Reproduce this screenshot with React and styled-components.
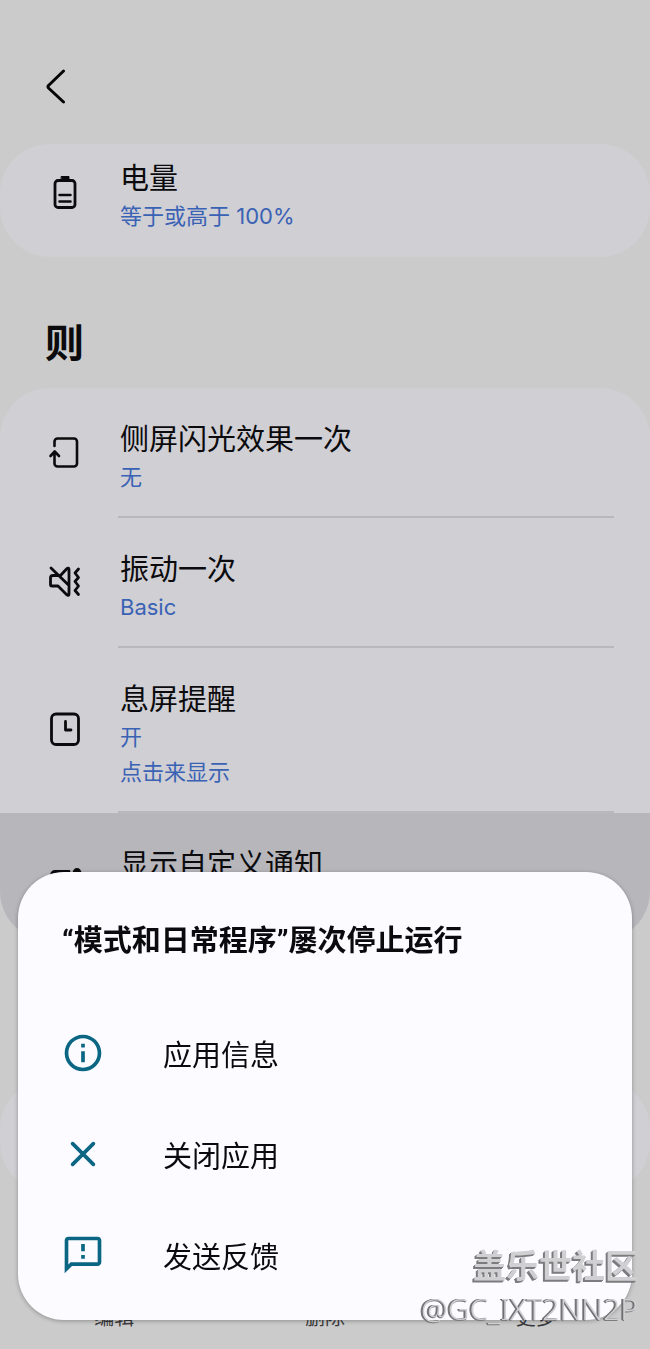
import React from 'react';
import styled, { createGlobalStyle } from 'styled-components';
import { MdInfoOutline, MdOutlineFeedback } from 'react-icons/md';

const GlobalStyle = createGlobalStyle`
  * {
    box-sizing: border-box;
  }
  body {
    margin: 0;
    background-color: #cbcbcb;
    font-family: Inter, 'Noto Sans CJK SC', sans-serif;
    color: #0b0b0d;
  }
`;
const Page = styled.div`
  display: flex;
  flex-direction: column;
  height: 100vh;
  overflow: hidden;
`;
const Header = styled.header`
  display: flex;
  padding: 63px 32px 33px;
`;
const BackButton = styled.button`
  display: flex;
  align-items: center;
  justify-content: center;
  width: 48px;
  height: 48px;
  padding: 0;
  border: none;
  background: none;
  color: #050505;
`;
const Content = styled.main`
  flex: 1;
  min-height: 0;
`;
const Card = styled.section`
  min-height: 113px;
  margin-top: ${(props) => props.$gap || 0}px;
  border-radius: 50px;
  background-color: #d0cfd4;
  overflow: hidden;
`;
const Heading = styled.h2`
  margin: 0;
  padding: 62px 45px 22px;
  font-size: 39px;
  line-height: 47px;
  font-weight: 700;
`;
const Row = styled.div`
  display: flex;
  background-color: ${(props) => (props.$pressed ? '#b7b6bb' : 'transparent')};
`;
const RowIcon = styled.div`
  display: flex;
  align-items: center;
  justify-content: center;
  width: 130px;
  padding: ${(props) => (props.$compact ? '12px 0 28px' : '27px 0 30px')};
`;
const RowText = styled.div`
  flex: 1;
  margin: 0 36px 0 -12px;
  padding: ${(props) => (props.$compact ? '15px 0 23px 2px' : '32px 0 21px 2px')};
  border-bottom: ${(props) => (props.$last ? 'none' : '2px solid #b9b8bd')};
`;
const RowTitle = styled.div`
  font-size: 29px;
  line-height: 40px;
`;
const RowValue = styled.div`
  font-size: 22px;
  line-height: 35px;
  color: #3a62b4;
`;
const BottomBar = styled.nav`
  display: flex;
  padding: 0 9px 14px;
`;
const BarButton = styled.button`
  flex: 1;
  height: 34px;
  padding: 0;
  border: none;
  background: none;
  font-family: inherit;
  font-size: 20px;
  line-height: 34px;
  color: #3a3a3c;
`;
const Dialog = styled.div`
  position: fixed;
  left: 18px;
  right: 18px;
  bottom: 29px;
  padding: 47px 0 13px;
  border-radius: 46px;
  background-color: #fcfbff;
  box-shadow: 0 1px 4px rgba(0, 0, 0, 0.3);
`;
const DialogTitle = styled.h1`
  margin: 0 0 41px;
  padding: 0 44px;
  font-family: Roboto, 'Noto Sans CJK SC', sans-serif;
  font-size: 29px;
  line-height: 44px;
  font-weight: 700;
`;
const DialogButton = styled.button`
  display: flex;
  align-items: center;
  gap: 58px;
  width: 100%;
  height: 101px;
  padding: 2px 43px 0;
  border: none;
  background: none;
  font-family: inherit;
  font-size: 29px;
  line-height: 44px;
  color: #0b0b0d;

  svg {
    flex: none;
    margin-bottom: 6px;
    color: #0b6683;
  }
`;
const Watermark = styled.div`
  position: fixed;
  right: 12px;
  bottom: 20px;
  text-align: right;
  color: #d0d0d2;
  pointer-events: none;
`;
const WatermarkName = styled.div`
  font-size: 33px;
  line-height: 46px;
  font-weight: 700;
  text-shadow: -1px 1px 0 #7c7c7f, -2px 2px 0 #7c7c7f;
`;
const WatermarkUser = styled.div`
  font-family: 'Noto Sans', sans-serif;
  font-size: 30px;
  line-height: 40px;
  font-weight: 300;
  text-shadow: -1px 0 0 #6c6c6f, -2px 0 0 #7c7c7f, -1px 1px 0 #7c7c7f;
`;

function LineIcon({ children, size = 36, width = 3 }) {
  return (
    <svg
      width={size}
      height={size}
      viewBox="0 0 36 36"
      fill="none"
      stroke="currentColor"
      strokeWidth={width}
      strokeLinecap="round"
      strokeLinejoin="round"
      aria-hidden="true"
    >
      {children}
    </svg>
  );
}

const BatteryIcon = () => (
  <LineIcon>
    <rect x="8" y="5.500" width="20" height="27" rx="3" strokeWidth="2.800" />
    <path d="M14.500 1.500h7.500v4h-7.500z" fill="currentColor" strokeWidth="1" />
    <path d="M12.500 20h11M12.500 26.500h11" strokeWidth="2.500" />
  </LineIcon>
);
const EdgeIcon = () => (
  <LineIcon width={2.6}>
    <path d="M7.500 12V7.500a3 3 0 0 1 3-3H27a3 3 0 0 1 3 3v22a3 3 0 0 1-3 3H10.500a3 3 0 0 1-3-3V18.500M3.500 22l4.200-4.500 4.300 4.500" />
  </LineIcon>
);
const VibrateIcon = () => (
  <LineIcon width={2.8}>
    <path d="M4 4l18 17.500M3.500 14v6.500c0 1 .6 1.500 1.500 1.500h6l9 9c1 .8 2 .5 2-1V5.500c0-1.500-1-1.800-2-1L13.500 11.500H6c-1.500 0-2.500.8-2.500 2.500" />
    <path d="M31.500 5l-3.500 4 3.500 4.500-3.500 4 3.500 4.500-3.500 4.500 3.500 4" />
  </LineIcon>
);
const ClockIcon = () => (
  <LineIcon width={2.8}>
    <rect x="4.500" y="3" width="27" height="30.500" rx="4.500" />
    <path d="M18.500 10.500v8.500h5.500" />
  </LineIcon>
);
const NotifyIcon = () => (
  <LineIcon width={2.8}>
    <path d="M22 13.500H8a3.500 3.500 0 0 0-3.500 3.500v13a3.500 3.500 0 0 0 3.500 3.500h19a3.500 3.500 0 0 0 3.500-3.500V19" />
    <circle cx="30" cy="14.500" r="3" fill="currentColor" />
  </LineIcon>
);

const actions = [
  { id: 1, title: '侧屏闪光效果一次', values: ['无'], icon: <EdgeIcon /> },
  { id: 2, title: '振动一次', values: ['Basic'], icon: <VibrateIcon /> },
  { id: 3, title: '息屏提醒', values: ['开', '点击来显示'], icon: <ClockIcon /> },
  { id: 4, title: '显示自定义通知', values: ['开'], icon: <NotifyIcon />, pressed: true },
];

function RoutineRow({ item, compact, last }) {
  return (
    <Row $pressed={item.pressed}>
      <RowIcon $compact={compact}>{item.icon}</RowIcon>
      <RowText $compact={compact} $last={last}>
        <RowTitle>{item.title}</RowTitle>
        {item.values.map((value) => (
          <RowValue key={value}>{value}</RowValue>
        ))}
      </RowText>
    </Row>
  );
}

function App() {
  return (
    <Page>
      <GlobalStyle />
      <Header>
        <BackButton aria-label="返回">
          <LineIcon>
            <path d="M25.500 2L10.500 16.500a2 2 0 0 0 0 2.500L25.500 33" />
          </LineIcon>
        </BackButton>
      </Header>
      <Content>
        <Card>
          <RoutineRow
            item={{ title: '电量', values: ['等于或高于 100%'], icon: <BatteryIcon /> }}
            compact
            last
          />
        </Card>
        <Heading>则</Heading>
        <Card>
          {actions.map((item) => (
            <RoutineRow key={item.id} item={item} last={item.id === actions.length} />
          ))}
        </Card>
        <Card $gap={138} />
      </Content>
      <BottomBar>
        <BarButton>编辑</BarButton>
        <BarButton>删除</BarButton>
        <BarButton>更多</BarButton>
      </BottomBar>
      <Dialog role="dialog" aria-labelledby="dialog-title">
        <DialogTitle id="dialog-title">“模式和日常程序”屡次停止运行</DialogTitle>
        <DialogButton>
          <MdInfoOutline size={44} />
          应用信息
        </DialogButton>
        <DialogButton>
          <LineIcon size={44}>
            <path d="M9.500 9.500l17 17M26.500 9.500l-17 17" />
          </LineIcon>
          关闭应用
        </DialogButton>
        <DialogButton>
          <MdOutlineFeedback size={44} />
          发送反馈
        </DialogButton>
      </Dialog>
      <Watermark>
        <WatermarkName>盖乐世社区</WatermarkName>
        <WatermarkUser>@GC_IXT2NN2P</WatermarkUser>
      </Watermark>
    </Page>
  );
}
export default App;
